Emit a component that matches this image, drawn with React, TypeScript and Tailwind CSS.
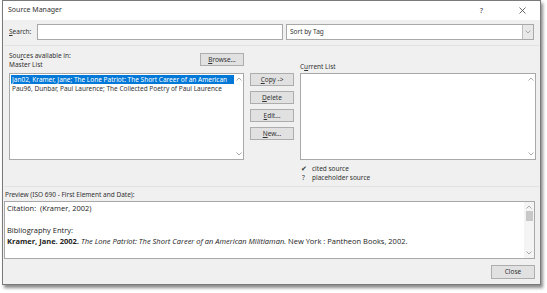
import React from "react";

const ui = { fontFamily: '"Noto Sans", "Open Sans", sans-serif' };
const prev = { fontFamily: '"Open Sans", "Noto Sans", sans-serif' };

function Chevron({ up }: { up?: boolean }) {
  return (
    <svg width="6" height="4" viewBox="0 0 6 4" className="block">
      <path
        d={up ? "M0.5 3.5 L3 1 L5.5 3.5" : "M0.5 0.5 L3 3 L5.5 0.5"}
        fill="none"
        stroke="#a0a0a0"
        strokeWidth="0.9"
      />
    </svg>
  );
}

function Btn({ label, u, h = "h-[13px]" }: { label: string; u?: number; h?: string }) {
  return (
    <div
      className={`w-[44px] ${h} flex items-center justify-center bg-[#e1e1e1] border border-[#adadad] text-[6.5px] text-[#333]`}
    >
      {u === undefined ? (
        <span>{label}</span>
      ) : (
        <span>
          {label.slice(0, u)}
          <span className="underline">{label[u]}</span>
          {label.slice(u + 1)}
        </span>
      )}
    </div>
  );
}

function ListBox({ children, w }: { children?: React.ReactNode; w: string }) {
  return (
    <div className={`${w} h-[87px] bg-white border border-[#a8a8a8] flex`}>
      <div className="flex-1 overflow-hidden pt-[1px] pl-[1px]">{children}</div>
      <div className="w-[9px] flex flex-col items-center justify-between py-[3px]">
        <Chevron up />
        <Chevron />
      </div>
    </div>
  );
}

export default function App() {
  return (
    <div className="w-[547px] h-[293px] bg-white overflow-hidden" style={ui}>
      <div className="ml-[2px] w-[539px] h-[285px] border border-[#7a7a7a] shadow-[2px_3px_3px_rgba(0,0,0,0.45)] bg-[#f0f0f0] flex flex-col">
        {/* title bar */}
        <div className="h-[19px] bg-white flex items-center pl-[5px] pr-[14px] text-[7px] text-[#333]">
          <span className="flex-1">Source Manager</span>
          <span className="mr-[36px] text-[7.5px]">?</span>
          <svg width="7" height="7" viewBox="0 0 7 7">
            <path d="M0.5 0.5 L6.5 6.5 M6.5 0.5 L0.5 6.5" stroke="#444" strokeWidth="0.8" />
          </svg>
        </div>

        {/* search row */}
        <div className="flex items-center pt-[4px] pl-[6px] text-[6.5px] text-[#333]">
          <span className="w-[28px]">
            <span className="underline">S</span>earch:
          </span>
          <div className="w-[246px] h-[16px] bg-white border border-[#a8a8a8]" />
          <div className="ml-[3px] w-[248px] h-[16px] bg-white border border-[#a8a8a8] flex items-center pl-[3px]">
            <span className="flex-1">Sort by Tag</span>
            <div className="w-[11px] h-[14px] bg-[#e8e8e8] border-l border-[#bdbdbd] flex items-center justify-center">
              <Chevron />
            </div>
          </div>
        </div>
        <div className="mt-[5px] mx-[1px] h-px bg-[#e2e2e2]" />

        {/* lists */}
        <div className="flex pl-[6px] pt-[4px] text-[6.5px] text-[#333]">
          <div className="w-[235px] flex flex-col">
            <div className="h-[23px] flex justify-between">
              <div className="leading-[9px] pt-[1px]">
                <div>
                  Sou<span className="underline">r</span>ces available in:
                </div>
                <div>Master List</div>
              </div>
              <div className="pt-[3px]">
                <Btn label="Browse..." u={0} />
              </div>
            </div>
            <ListBox w="w-[235px]">
              <div className="whitespace-nowrap leading-[8px]">
                <div className="bg-[#0078d7] text-white pl-[1px] py-[0.5px]">
                  Jan02, Kramer, Jane; The Lone Patriot: The Short Career of an American
                </div>
                <div className="pl-[1px] mt-[1px]">
                  Pau96, Dunbar, Paul Laurence; The Collected Poetry of Paul Laurence
                </div>
              </div>
            </ListBox>
          </div>

          <div className="ml-[6px] pt-[23px] flex flex-col gap-[5px]">
            <Btn label="Copy ->" u={0} />
            <Btn label="Delete" u={0} />
            <Btn label="Edit..." u={0} />
            <Btn label="New..." u={0} />
          </div>

          <div className="ml-[6px] w-[236px] flex flex-col">
            <div className="h-[23px] flex items-end pb-[2px] leading-[9px]">
              <span>
                C<span className="underline">u</span>rrent List
              </span>
            </div>
            <ListBox w="w-[236px]" />
            <div className="mt-[4px] leading-[9px]">
              <div className="flex">
                <span className="w-[12px] pl-[1px]">✔</span>
                <span>cited source</span>
              </div>
              <div className="flex">
                <span className="w-[12px] pl-[2px]">?</span>
                <span>placeholder source</span>
              </div>
            </div>
          </div>
        </div>
        <div className="mt-[4px] mx-[1px] h-px bg-[#e2e2e2]" />

        {/* preview */}
        <div className="pl-[2px] pt-[3px] text-[6.5px] text-[#333] leading-[9px]">
          Preview (ISO 690 - First Element and Date):
        </div>
        <div className="ml-[1px] mt-[2px] w-[531px] h-[58px] bg-white border border-[#a8a8a8] flex" style={prev}>
          <div className="flex-1 pl-[2px] pt-[1px] text-[7.5px] text-[#222] leading-[11px] whitespace-nowrap overflow-hidden">
            <div>Citation:&nbsp; (Kramer, 2002)</div>
            <div>&nbsp;</div>
            <div>Bibliography Entry:</div>
            <div>
              <b>Kramer, Jane. 2002.</b>{" "}
              <i>The Lone Patriot: The Short Career of an American Militiaman.</i> New York : Pantheon Books, 2002.
            </div>
          </div>
          <div className="w-[10px] flex flex-col items-center py-[3px] bg-[#f4f4f4]">
            <Chevron up />
            <div className="mt-[2px] w-[7px] h-[10px] bg-[#c8c8c8]" />
            <div className="flex-1" />
            <Chevron />
          </div>
        </div>

        <div className="flex justify-end pr-[5px] pt-[6px]">
          <Btn label="Close" h="h-[14px]" />
        </div>
      </div>
    </div>
  );
}
